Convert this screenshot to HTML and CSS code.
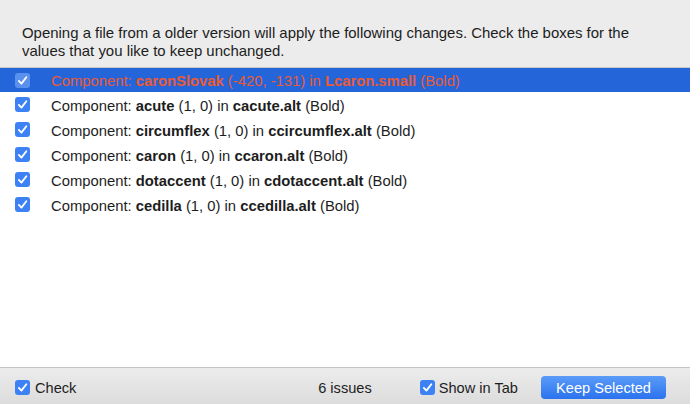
FILE: index.html
```html
<!DOCTYPE html>
<html>
<head>
<meta charset="utf-8">
<link rel="stylesheet" href="styles.css">
</head>
<body>
<div class="dialog">
  <div class="header">
    <p class="msg">Opening a file from a older version will apply the following changes. Check the boxes for the values that you like to keep unchanged.</p>
  </div>
  <div class="list">
    <div class="row selected">
      <span class="cb"><svg viewBox="0 0 14 14"><path d="M3.6 7.4 L6 9.9 L10.6 4"/></svg></span>
      <span class="label">Component: <b>caronSlovak</b> (-420, -131) in <b>Lcaron.small</b> (Bold)</span>
    </div>
    <div class="row">
      <span class="cb"><svg viewBox="0 0 14 14"><path d="M3.6 7.4 L6 9.9 L10.6 4"/></svg></span>
      <span class="label">Component: <b>acute</b> (1, 0) in <b>cacute.alt</b> (Bold)</span>
    </div>
    <div class="row">
      <span class="cb"><svg viewBox="0 0 14 14"><path d="M3.6 7.4 L6 9.9 L10.6 4"/></svg></span>
      <span class="label">Component: <b>circumflex</b> (1, 0) in <b>ccircumflex.alt</b> (Bold)</span>
    </div>
    <div class="row">
      <span class="cb"><svg viewBox="0 0 14 14"><path d="M3.6 7.4 L6 9.9 L10.6 4"/></svg></span>
      <span class="label">Component: <b>caron</b> (1, 0) in <b>ccaron.alt</b> (Bold)</span>
    </div>
    <div class="row">
      <span class="cb"><svg viewBox="0 0 14 14"><path d="M3.6 7.4 L6 9.9 L10.6 4"/></svg></span>
      <span class="label">Component: <b>dotaccent</b> (1, 0) in <b>cdotaccent.alt</b> (Bold)</span>
    </div>
    <div class="row">
      <span class="cb"><svg viewBox="0 0 14 14"><path d="M3.6 7.4 L6 9.9 L10.6 4"/></svg></span>
      <span class="label">Component: <b>cedilla</b> (1, 0) in <b>ccedilla.alt</b> (Bold)</span>
    </div>
  </div>
  <div class="footer">
    <label class="check">
      <span class="cb"><svg viewBox="0 0 14 14"><path d="M3.6 7.4 L6 9.9 L10.6 4"/></svg></span>
      <span class="txt">Check</span>
    </label>
    <span class="issues txt">6 issues</span>
    <label class="check tab">
      <span class="cb"><svg viewBox="0 0 14 14"><path d="M3.6 7.4 L6 9.9 L10.6 4"/></svg></span>
      <span class="txt">Show in Tab</span>
    </label>
    <button class="btn">Keep Selected</button>
  </div>
</div>
</body>
</html>
```
FILE: styles.css
```css
html, body {
  margin: 0;
  padding: 0;
}
body {
  width: 690px;
  height: 404px;
  overflow: hidden;
  font-family: "Liberation Sans", Arial, sans-serif;
  font-size: 14.6px;
  color: #1d1d1d;
  background: #fff;
}
.dialog {
  display: flex;
  flex-direction: column;
  height: 404px;
}
.header {
  background: #ececec;
  height: 68px;
  box-sizing: border-box;
  padding: 24px 26px 0 22px;
  border-bottom: 1px solid #c9c9c9;
}
.msg {
  margin: 0;
  line-height: 18px;
  font-size: 14.95px;
}
.list {
  flex: 1;
  background: #fff;
}
.row {
  display: flex;
  align-items: center;
  height: 25px;
  padding-left: 15px;
  font-size: 14.8px;
}
.row .label {
  margin-left: 21px;
  padding-top: 2px;
}
.row.selected {
  background: #2466d9;
  color: #ec5a33;
  height: 24px;
}
.cb {
  width: 15px;
  height: 15px;
  border-radius: 3px;
  background: #3d82f4;
  display: inline-flex;
  align-items: center;
  justify-content: center;
  box-sizing: border-box;
  flex: none;
}
.selected .cb {
  background: #5a91ee;
}
.cb svg {
  width: 15px;
  height: 15px;
}
.cb path {
  fill: none;
  stroke: #fff;
  stroke-width: 1.7;
  stroke-linecap: round;
  stroke-linejoin: round;
}
.footer {
  height: 37px;
  box-sizing: border-box;
  border-top: 1px solid #c4c4c4;
  background: linear-gradient(#ececec, #dcdcdc);
  display: flex;
  align-items: center;
  padding-left: 15px;
  padding-top: 2px;
}
.txt {
  padding-top: 2px;
}
.check {
  display: flex;
  align-items: center;
  gap: 5px;
}
.issues {
  margin-left: auto;
}
.tab {
  margin-left: 48px;
  gap: 4px;
}
.btn {
  margin-left: 23px;
  margin-right: 24px;
  width: 125px;
  height: 23px;
  border: none;
  border-radius: 4px;
  background: linear-gradient(#5b9cf8, #2b72ee);
  color: #fff;
  font-family: "Liberation Sans", Arial, sans-serif;
  font-size: 14.6px;
  padding: 1px 0 0;
}
```
